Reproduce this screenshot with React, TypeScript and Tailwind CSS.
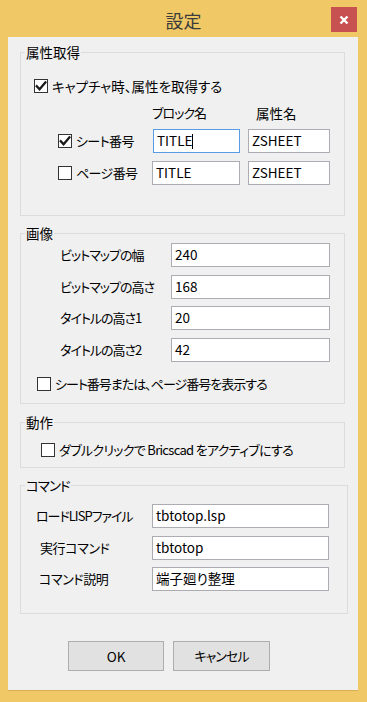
import React from 'react';

const font = "font-['Noto_Sans_CJK_JP','Noto_Sans_CJK_SC',sans-serif] [font-feature-settings:'palt']";

function CheckBox({ checked }: { checked: boolean }) {
  return (
    <span className="w-[14px] h-[14px] shrink-0 border border-[#333333] bg-white flex items-center justify-center">
      {checked && (
        <svg width="12" height="12" viewBox="0 0 12 12">
          <path d="M1.8 6.2 L4.6 9.2 L10.4 2.4" fill="none" stroke="#1a1a1a" strokeWidth="2.3" strokeLinecap="square" />
        </svg>
      )}
    </span>
  );
}

function TextBox({ value, w, focused, caret }: { value: string; w: string; focused?: boolean; caret?: boolean }) {
  return (
    <div
      className={`h-[24px] ${w} bg-white border ${focused ? 'border-[#569de5]' : 'border-[#abadb3]'} flex items-center pl-[3px] text-[13.5px] tracking-normal text-black leading-none`}
    >
      <span>{value}</span>
      {caret && <span className="inline-block w-px h-[15px] bg-black" />}
    </div>
  );
}

function Group({ title, className, children }: { title: string; className: string; children: React.ReactNode }) {
  return (
    <fieldset className={`border border-[#dcdcdc] ${className}`}>
      <legend className="ml-[4px] px-[1px] text-[13.5px] leading-[16px] text-black">{title}</legend>
      {children}
    </fieldset>
  );
}

export default function App() {
  return (
    <div className={`w-[367px] h-[702px] bg-[#f0c865] flex flex-col ${font}`}>
      {/* title bar */}
      <div className="h-[37px] grid grid-cols-[1fr_auto_1fr] items-start">
        <div />
        <div className="pt-[7px] text-[18px] leading-[26px] text-[#3c3c3c]">設定</div>
        <div className="flex justify-end pt-[7px] pr-[10px]">
          <div className="w-[26px] h-[25px] bg-[#c75050] flex items-center justify-center">
            <svg width="10" height="10" viewBox="0 0 10 10">
              <path d="M1.5 1.5 L8.5 8.5 M8.5 1.5 L1.5 8.5" stroke="#ffffff" strokeWidth="2.4" />
            </svg>
          </div>
        </div>
      </div>

      {/* client area */}
      <div className="ml-[8px] w-[350px] h-[654px] bg-[#f0f0f0] border-b border-[#d9ae55] flex flex-col pl-[12px] pt-[7px] text-[13px] leading-[16px] text-black">
        <Group title="属性取得" className="w-[325px] pb-[30px]">
          <div className="mt-[18px] pl-[13px] flex items-center gap-[4px] text-[13.5px]">
            <CheckBox checked />
            <span>キャプチャ時、属性を取得する</span>
          </div>
          <div className="mt-[11px] flex pl-[131px] tracking-[-1px]">
            <span className="w-[104px]">ブロック名</span>
            <span className="tracking-normal text-[13.5px]">属性名</span>
          </div>
          <div className="mt-[8px] flex items-center pl-[37px]">
            <div className="w-[95px] flex items-center gap-[4px] tracking-[-0.6px]">
              <CheckBox checked />
              <span>シート番号</span>
            </div>
            <TextBox value="TITLE" w="w-[87px]" focused caret />
            <div className="w-[8px]" />
            <TextBox value="ZSHEET" w="w-[82px]" />
          </div>
          <div className="mt-[8px] flex items-center pl-[37px]">
            <div className="w-[94px] flex items-center gap-[4px] tracking-[-0.6px]">
              <CheckBox checked={false} />
              <span>ページ番号</span>
            </div>
            <TextBox value="TITLE" w="w-[88px]" />
            <div className="w-[8px]" />
            <TextBox value="ZSHEET" w="w-[82px]" />
          </div>
        </Group>

        <Group title="画像" className="w-[325px] mt-[9px] pb-[11px]">
          <div className="mt-[2px] flex items-center pl-[39px]">
            <span className="w-[111px] tracking-[-1px]">ビットマップの幅</span>
            <TextBox value="240" w="w-[159px]" />
          </div>
          <div className="mt-[8px] flex items-center pl-[39px]">
            <span className="w-[111px] tracking-[-1px]">ビットマップの高さ</span>
            <TextBox value="168" w="w-[159px]" />
          </div>
          <div className="mt-[7px] flex items-center pl-[39px]">
            <span className="w-[111px] tracking-[-1px]">タイトルの高さ1</span>
            <TextBox value="20" w="w-[159px]" />
          </div>
          <div className="mt-[8px] flex items-center pl-[39px]">
            <span className="w-[111px] tracking-[-1px]">タイトルの高さ2</span>
            <TextBox value="42" w="w-[159px]" />
          </div>
          <div className="mt-[14px] pl-[16px] flex items-center gap-[4px] tracking-[-1px]">
            <CheckBox checked={false} />
            <span>シート番号または、ページ番号を表示する</span>
          </div>
        </Group>

        <Group title="動作" className="w-[325px] mt-[10px] pb-[9px]">
          <div className="mt-[12px] pl-[20px] flex items-center gap-[4px] tracking-[-0.7px]">
            <CheckBox checked={false} />
            <span>ダブルクリックで Bricscad をアクティブにする</span>
          </div>
        </Group>

        <Group title="コマンド" className="w-[328px] mt-[9px] pb-[22px] tracking-[-1px]">
          <div className="mt-[11px] flex items-center pl-[15px]">
            <span className="w-[116px]">ロードLISPファイル</span>
            <TextBox value="tbtotop.lsp" w="w-[177px]" />
          </div>
          <div className="mt-[8px] flex items-center pl-[19px]">
            <span className="w-[112px] tracking-[-0.4px]">実行コマンド</span>
            <TextBox value="tbtotop" w="w-[177px]" />
          </div>
          <div className="mt-[7px] flex items-center pl-[18px]">
            <span className="w-[113px] tracking-[-0.4px]">コマンド説明</span>
            <TextBox value="端子廻り整理" w="w-[177px]" />
          </div>
        </Group>

        <div className="mt-[27px] flex gap-[9px] pl-[48px]">
          <button className="w-[96px] h-[30px] bg-[#e1e1e1] border border-[#adadad] text-[13.5px]">OK</button>
          <button className="w-[97px] h-[30px] bg-[#e1e1e1] border border-[#adadad] text-[13px] tracking-[-1px]">キャンセル</button>
        </div>
      </div>
    </div>
  );
}
